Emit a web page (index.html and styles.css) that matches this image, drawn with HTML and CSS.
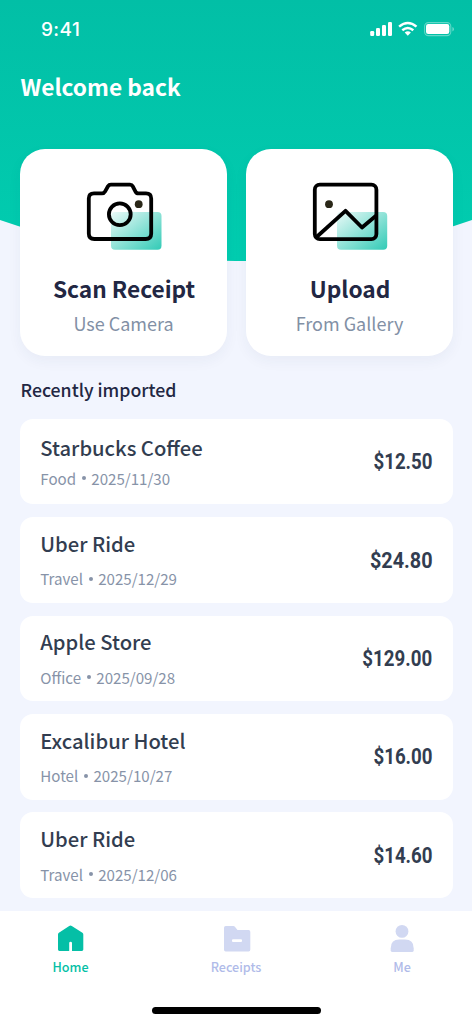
FILE: index.html
```
<!DOCTYPE html>
<html lang="en">
<head>
<meta charset="utf-8">
<title>Receipts</title>
<link rel="stylesheet" href="styles.css">
</head>
<body>
<div class="app">
  <svg class="backdrop" viewBox="0 0 472 262" aria-hidden="true">
    <defs><linearGradient id="teal" x1="0" y1="0" x2="0" y2="1"><stop offset="0" stop-color="#02bfa6"/><stop offset="1" stop-color="#01cdb0"/></linearGradient></defs>
    <path d="M0 0H472V220Q236 302 0 220Z" fill="url(#teal)"/>
  </svg>
  <header class="status">
    <span class="clock">9:41</span>
    <svg class="indicators" width="86" height="16" viewBox="368 21 86 16" fill="#fff">
      <rect x="370.2" y="31" width="4" height="5" rx="1.2"/><rect x="376" y="28" width="4" height="8" rx="1.2"/><rect x="382" y="25" width="4" height="11" rx="1.2"/><rect x="388" y="22" width="4" height="14" rx="1.2"/>
      <g fill="none" stroke="#fff" stroke-width="2.5"><path d="M399.1 26.6Q407.8 19.4 416.5 26.6"/><path d="M402.3 30.2Q407.8 25.8 413.3 30.2"/></g>
      <path d="M404.7 32.6Q407.8 30 410.9 32.6L407.8 35.8Z"/>
      <rect x="424.6" y="22.6" width="26.2" height="13" rx="3.8" fill="none" stroke="#fff" stroke-opacity=".38" stroke-width="1.1"/>
      <rect x="426" y="24" width="23.3" height="10" rx="2.2"/>
      <path d="M452.4 27v4.4q1.6-.6 1.6-2.2t-1.6-2.2Z" opacity=".4"/>
    </svg>
  </header>
  <h1 class="welcome">Welcome back</h1>
  <section class="actions">
    <a class="action">
      <svg width="80" height="72" viewBox="84 180 80 72">
        <defs><linearGradient id="tile" x1="0" y1="0" x2="1" y2="1"><stop offset="0" stop-color="#05bfa6" stop-opacity=".08"/><stop offset="1" stop-color="#05bfa6" stop-opacity=".82"/></linearGradient></defs>
        <rect x="111" y="212" width="50.5" height="37.8" rx="4" fill="url(#tile)"/>
        <g fill="none" stroke="#000" stroke-width="3.8" stroke-linejoin="round"><path d="M94 193.4H102Q104 193.4 105 191.6L108 186.3Q109 184.7 111 184.7H130Q132 184.7 132.8 186.3L135.5 191.6Q136.4 193.4 138.5 193.4H146Q151.2 193.4 151.2 198.6V233.5Q151.2 239 145.7 239H94.3Q88.8 239 88.8 233.5V198.6Q88.8 193.4 94 193.4Z"/><circle cx="119.8" cy="214.3" r="10.9"/></g>
        <circle cx="138.7" cy="204.2" r="3.9" fill="#2a2718"/>
      </svg>
      <strong>Scan Receipt</strong><span>Use Camera</span>
    </a>
    <a class="action">
      <svg width="80" height="72" viewBox="310 180 80 72">
        <rect x="337" y="212" width="50.2" height="37.8" rx="4" fill="url(#tile)"/>
        <g fill="none" stroke="#000" stroke-width="3.8" stroke-linejoin="round"><rect x="314.8" y="184.7" width="61.6" height="54.4" rx="5"/><path d="M316 237.5L345.5 210.8L362 227.5L376 215.8"/></g>
        <circle cx="329" cy="204.2" r="3.9" fill="#2a2718"/>
      </svg>
      <strong>Upload</strong><span>From Gallery</span>
    </a>
  </section>
  <h2 class="section-title">Recently imported</h2>
  <ul class="receipts">
    <li class="receipt tight"><div><h3>Starbucks Coffee</h3><p>Food<i></i>2025/11/30</p></div><b class="narrow">$12.50</b></li>
    <li class="receipt"><div><h3>Uber Ride</h3><p>Travel<i></i>2025/12/29</p></div><b>$24.80</b></li>
    <li class="receipt"><div><h3>Apple Store</h3><p>Office<i></i>2025/09/28</p></div><b class="narrow">$129.00</b></li>
    <li class="receipt"><div><h3>Excalibur Hotel</h3><p>Hotel<i></i>2025/10/27</p></div><b class="narrow">$16.00</b></li>
    <li class="receipt"><div><h3>Uber Ride</h3><p>Travel<i></i>2025/12/06</p></div><b class="narrow">$14.60</b></li>
  </ul>
  <nav class="tabs">
    <a class="tab active">
      <svg width="32" height="30" viewBox="55 923 32 30" fill="currentColor"><path d="M69.2 926Q70.5 925.2 71.8 926L82.4 932.8Q83.3 933.4 83.3 934.5V949.6Q83.3 951 81.9 951H72V943Q72 941.8 70.6 941.8T69.2 943V951H59.4Q58 951 58 949.6V934.5Q58 933.4 58.9 932.8Z"/></svg>
      <span>Home</span>
    </a>
    <a class="tab">
      <svg width="32" height="30" viewBox="220 923 32 30"><path d="M225.7 926H233.3Q234.4 926 235.1 926.9L237.5 930H248.6Q250.3 930 250.3 931.7V949.8Q250.3 951.5 248.6 951.5H225.7Q224 951.5 224 949.8V927.7Q224 926 225.7 926Z" fill="#d1d8f2"/><rect x="232" y="939.3" width="10" height="2.7" rx="1" fill="#fff"/></svg>
      <span>Receipts</span>
    </a>
    <a class="tab me">
      <svg width="32" height="30" viewBox="386.3 923 32 30" fill="#d1d8f2"><circle cx="402.3" cy="931.4" r="6.4"/><path d="M399.5 939.6H405.3Q414 939.6 414 948.3V950.6Q414 952 412.6 952H392.4Q391 952 391 950.6V948.3Q391 939.6 399.5 939.6Z"/></svg>
      <span>Me</span>
    </a>
  </nav>
  <div class="home-indicator"></div>
</div>
</body>
</html>
```

FILE: styles.css
```
* { box-sizing: border-box; margin: 0; padding: 0; }
body { font-family: "Noto Sans CJK SC", "Noto Sans", sans-serif; background: #f2f5fe; }
.app { position: relative; width: 472px; height: 1024px; overflow: hidden; display: flex; flex-direction: column; }
.backdrop { position: absolute; top: 0; left: 0; width: 472px; height: 262px; }
.app > :not(.backdrop) { position: relative; flex-shrink: 0; }
.status { height: 58px; padding: 0 18px 0 41px; display: flex; align-items: center; justify-content: space-between; color: #fff; }
.clock { padding-top: 1px; font: 500 19px/24px Inter, sans-serif; letter-spacing: .4px; }
.welcome { margin: 14px 0 0 20.5px; font-size: 22.7px; line-height: 30px; font-weight: 700; color: #fff; }
.actions { margin-top: 47px; padding: 0 19px 0 20px; display: grid; grid-template-columns: 207px 207px; justify-content: space-between; }
.action { height: 206.5px; padding-top: 31px; display: flex; flex-direction: column; align-items: center; background: #fff; border-radius: 25px; box-shadow: 0 5px 14px rgba(40, 50, 90, .05); }
.action strong { margin-top: 21.5px; padding-left: 1px; font-size: 22.7px; line-height: 30px; color: #222743; }
.action span { margin-top: 7px; font-size: 18px; line-height: 24px; color: #8290a5; }
.section-title { margin: 21px 0 0 20.5px; font-size: 17.7px; line-height: 24px; font-weight: 500; color: #222743; }
.receipts { list-style: none; margin: 18.3px 19px 0 20px; display: flex; flex-direction: column; gap: 12.7px; }
.receipt { height: 85.7px; padding: 0 20.5px 0 20.3px; display: flex; align-items: center; justify-content: space-between; background: #fff; border-radius: 13px; }
.receipt > div { padding-top: .5px; }
.receipt h3 { font-size: 20.2px; line-height: 26px; font-weight: 500; color: #323d50; }
.receipt p { margin-top: 10.4px; font-size: 15.1px; line-height: 22px; color: #8793a8; display: flex; align-items: center; }
.receipt.tight > div { padding-top: 1px; }
.receipt.tight p { margin-top: 5.3px; }
.receipt i { width: 4px; height: 4px; margin: 1px 5.6px 0; border-radius: 50%; background: #8793a8; }
.receipt b { padding-top: 1px; font: 700 22px/28px Roboto, sans-serif; color: #323d50; transform: scaleX(.9); transform-origin: right; }
.receipt b.narrow { transform: scaleX(.85); }
.tabs { height: 114px; margin-top: 12.7px; padding: 12.5px 20px 0; display: flex; justify-content: space-between; background: #fff; }
.tab { width: 101px; height: 60px; display: flex; flex-direction: column; align-items: center; color: #b0bbe9; font-size: 12.6px; line-height: 18px; font-weight: 500; }
.tab span { margin-top: 5px; }
.tab.me { padding-left: 1px; }
.tab.active { color: #05bfa6; }
.app > .home-indicator { position: absolute; left: 152px; top: 1007.3px; width: 169px; height: 6.7px; border-radius: 4px; background: #000; }
```
